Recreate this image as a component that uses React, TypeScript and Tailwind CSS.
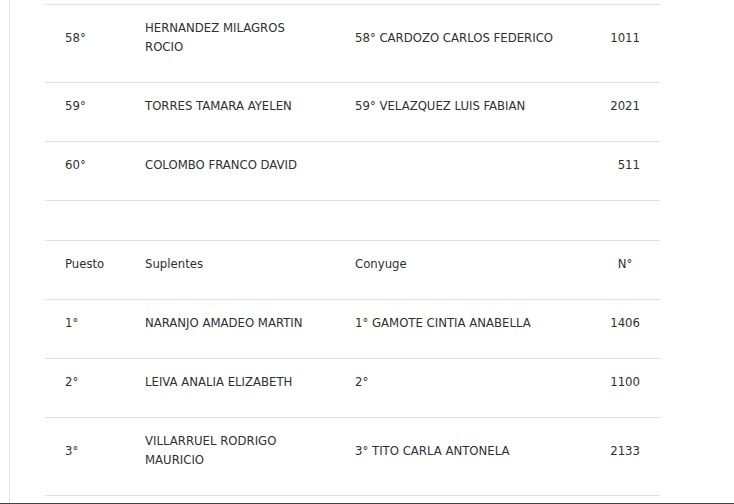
const titulares = [
  { puesto: '58°', nombre: 'HERNANDEZ MILAGROS ROCIO', conyuge: '58° CARDOZO CARLOS FEDERICO', numero: '1011' },
  { puesto: '59°', nombre: 'TORRES TAMARA AYELEN', conyuge: '59° VELAZQUEZ LUIS FABIAN', numero: '2021' },
  { puesto: '60°', nombre: 'COLOMBO FRANCO DAVID', conyuge: '', numero: '511' },
];

const suplentes = [
  { puesto: '1°', nombre: 'NARANJO AMADEO MARTIN', conyuge: '1° GAMOTE CINTIA ANABELLA', numero: '1406' },
  { puesto: '2°', nombre: 'LEIVA ANALIA ELIZABETH', conyuge: '2°', numero: '1100' },
  { puesto: '3°', nombre: 'VILLARRUEL RODRIGO MAURICIO', conyuge: '3° TITO CARLA ANTONELA', numero: '2133' },
];

type Fila = { puesto: string; nombre: string; conyuge: string; numero: string };

const td = 'px-5 pt-[13px] pb-[26px] align-middle';

function Cols() {
  return (
    <colgroup>
      <col className="w-[80px]" />
      <col className="w-[210px]" />
      <col className="w-[255px]" />
      <col className="w-[70px]" />
    </colgroup>
  );
}

function Row({ f }: { f: Fila }) {
  return (
    <tr className="border-t border-[#e0e0e0]">
      <td className={td}>{f.puesto}</td>
      <td className={td}>{f.nombre}</td>
      <td className={td}>{f.conyuge}</td>
      <td className={`${td} text-right`}>{f.numero}</td>
    </tr>
  );
}

export default function App() {
  return (
    <div
      className="w-full h-[504px] bg-white flex flex-col overflow-hidden text-[13px] leading-[19px] text-[#2f2f2f]"
      style={{ fontFamily: '"DejaVu Sans Condensed", "DejaVu Sans", sans-serif' }}
    >
      <div className="flex-1 flex pl-[9px] overflow-hidden">
        <div className="flex-1 border-l border-[#e3e3e3] pl-[35px] pt-[4px]">
          <table className="w-[615px] table-fixed border-collapse">
            <Cols />
            <tbody>
              {titulares.map((f) => (
                <Row key={f.puesto} f={f} />
              ))}
              <tr className="border-t border-[#e0e0e0]">
                <td colSpan={4} className="h-[40px] p-0"></td>
              </tr>
              <tr className="border-t border-[#e0e0e0]">
                <td className={td}>Puesto</td>
                <td className={td}>Suplentes</td>
                <td className={td}>Conyuge</td>
                <td className={`${td} text-center`}>N°</td>
              </tr>
              {suplentes.map((f) => (
                <Row key={f.puesto} f={f} />
              ))}
              <tr className="border-t border-[#e0e0e0]">
                <td colSpan={4} className="h-[20px] p-0"></td>
              </tr>
            </tbody>
          </table>
        </div>
      </div>
      <div className="h-[1.5px] bg-[#3d4247]"></div>
    </div>
  );
}
